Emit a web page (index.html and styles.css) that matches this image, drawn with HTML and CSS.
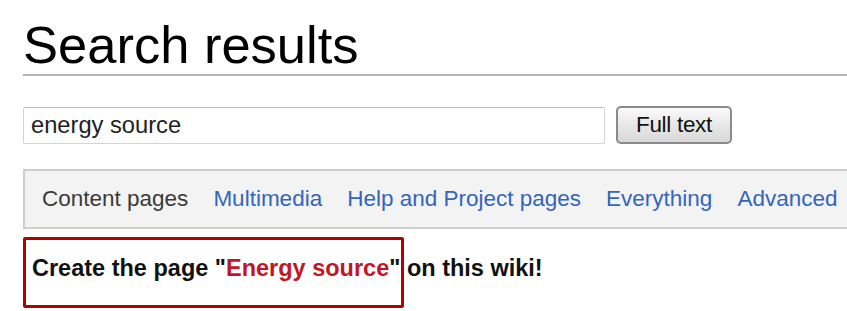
FILE: index.html
```html
<!DOCTYPE html>
<html lang="en">
<head>
    <meta charset="UTF-8">
    <meta name="viewport" content="width=device-width, initial-scale=1.0">
    <title>Search results</title>
    <link rel="stylesheet" href="styles.css">
</head>
<body>
    <div class="page">
        <h1 class="title">Search results</h1>
        <form class="search">
            <input class="search-input" type="text" value="energy source">
            <button class="search-button" type="button">Full text</button>
        </form>
        <div class="tabs">
            <span class="tab current">Content pages</span>
            <a class="tab" href="#">Multimedia</a>
            <a class="tab" href="#">Help and Project pages</a>
            <a class="tab" href="#">Everything</a>
            <a class="tab" href="#">Advanced</a>
        </div>
        <div class="create">
            <p class="create-text">Create the page "<a class="new" href="#">Energy source</a>" on this wiki!</p>
            <div class="highlight"></div>
        </div>
    </div>
</body>
</html>
```

FILE: styles.css
```css
* {
    box-sizing: border-box;
    margin: 0;
    padding: 0;
}
html, body {
    height: 100%;
    overflow: hidden;
}
body {
    background-color: #fff;
    color: #111;
    font-family: "Liberation Sans", Arial, sans-serif;
}
.page {
    padding: 16px 0 0 23px;
}
.title {
    border-bottom: 2px solid #b4b4b4;
    color: #000;
    font-size: 52.5px;
    font-weight: normal;
    line-height: 58px;
}
.search {
    align-items: center;
    display: flex;
    gap: 11px;
    margin-top: 30px;
}
.search-input {
    border: 1px solid #d4d4d4;
    border-top-color: #bbb;
    border-radius: 2px;
    color: #222;
    font-family: inherit;
    font-size: 23.7px;
    height: 37px;
    padding: 0 7px;
    width: 582px;
}
.search-button {
    background: linear-gradient(#fafafa, #e6e6e6 55%, #d8d8d8);
    border: 2px solid #8a8a8a;
    border-radius: 5px;
    color: #111;
    font-family: inherit;
    font-size: 22.5px;
    height: 38px;
    letter-spacing: -.3px;
    width: 116px;
}
.tabs {
    align-items: center;
    background-color: #f3f3f3;
    border: 2px solid #cdcdcd;
    border-right: none;
    display: flex;
    gap: 25px;
    height: 60px;
    margin-top: 25px;
    padding-left: 17px;
    white-space: nowrap;
}
.tab {
    color: #3366bb;
    font-size: 22.5px;
    text-decoration: none;
}
.tab.current {
    color: #3a3a3a;
}
.create {
    position: relative;
}
.create-text {
    font-size: 23.5px;
    font-weight: bold;
    padding: 26px 0 0 9px;
}
.new {
    color: #c41525;
    text-decoration: none;
}
.highlight {
    border: 3px solid #b30000;
    border-radius: 2px;
    height: 71px;
    left: 0;
    position: absolute;
    top: 8px;
    width: 381px;
}
```
